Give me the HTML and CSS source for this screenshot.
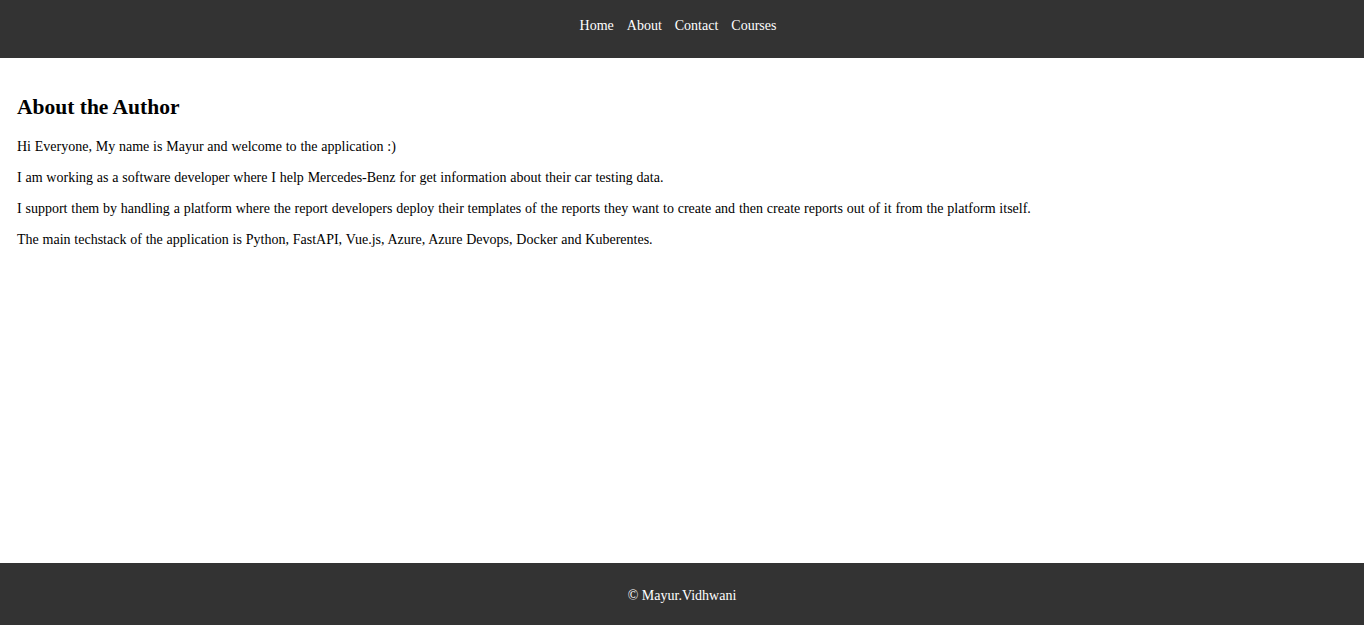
FILE: index.html
```html
<!DOCTYPE html>
<html lang="en">
<head>
<meta charset="utf-8">
<title>About</title>
<link rel="stylesheet" href="styles.css">
</head>
<body>
<div class="page">
  <header class="site-header">
    <nav class="nav">
      <a href="#">Home</a>
      <a href="#">About</a>
      <a href="#">Contact</a>
      <a href="#">Courses</a>
    </nav>
  </header>
  <main class="content">
    <h2 class="title">About the Author</h2>
    <p>Hi Everyone, My name is Mayur and welcome to the application :)</p>
    <p>I am working as a software developer where I help Mercedes-Benz for get information about their car testing data.</p>
    <p>I support them by handling a platform where the report developers deploy their templates of the reports they want to create and then create reports out of it from the platform itself.</p>
    <p>The main techstack of the application is Python, FastAPI, Vue.js, Azure, Azure Devops, Docker and Kuberentes.</p>
  </main>
  <footer class="site-footer">© Mayur.Vidhwani</footer>
</div>
</body>
</html>
```

FILE: styles.css
```css
html, body {
  margin: 0;
  padding: 0;
}
body {
  font-family: "Liberation Serif", "Times New Roman", serif;
  font-size: 14px;
  color: #000;
  background: #fff;
}
.page {
  display: flex;
  flex-direction: column;
  min-height: 100vh;
}
.site-header {
  background: #333;
  height: 58px;
  box-sizing: border-box;
  padding-top: 18px;
}
.nav {
  display: flex;
  justify-content: center;
  gap: 13px;
  padding-right: 8px;
}
.nav a {
  color: #fff;
  text-decoration: none;
  line-height: 16px;
}
.content {
  flex: 1;
  padding: 21px 17px 20px;
}
.title {
  font-size: 21.5px;
  margin: 16px 0 19px;
}
.content p {
  margin: 0 0 15px;
  line-height: 16px;
  word-spacing: 0.3px;
}
.site-footer {
  background: #333;
  color: #fff;
  text-align: center;
  height: 62px;
  box-sizing: border-box;
  padding-top: 25px;
  line-height: 16px;
}
```
